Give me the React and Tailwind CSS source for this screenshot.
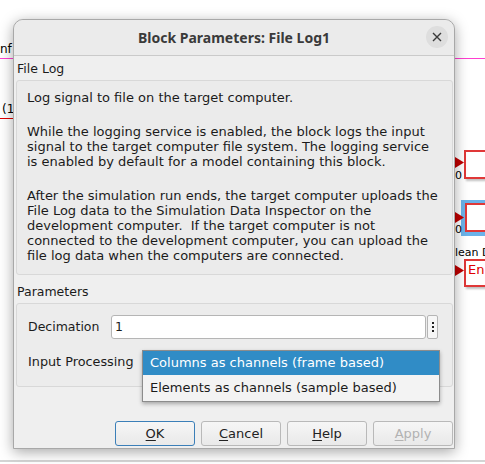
import React from "react";

const Arrow = ({ top }) => (
  <svg className="absolute" style={{ left: 455, top }} width="9" height="11" viewBox="0 0 9 11">
    <polygon points="0,0 9,5.5 0,11" fill="#c00000" />
  </svg>
);

const Btn = ({ u, rest, primary, disabled }) => (
  <button
    className={
      "w-[80px] h-[25px] rounded-[3px] border text-[13px] bg-gradient-to-b from-[#f6f6f6] to-[#e9e9e9] " +
      (primary ? "border-[#3b7fb8] " : "border-[#b9b9b9] ") +
      (disabled ? "text-[#b2b2b2]" : "text-[#222]")
    }
  >
    <span className="underline underline-offset-2">{u}</span>
    {rest}
  </button>
);

export default function App() {
  return (
    <div className="relative w-[485px] h-[464px] bg-white overflow-hidden font-['DejaVu_Sans',sans-serif] text-[#1b1b1b]">
      {/* diagram canvas behind the dialog */}
      <div className="absolute left-0 right-0 top-[58px] h-px bg-[#ff3fd0]" />
      <div className="absolute left-0 top-[40px] text-[12px] text-black">nf</div>
      <div className="absolute left-[2px] top-[100px] text-[12px] text-black">(1</div>
      <div className="absolute left-0 w-[14px] top-[118px] h-px bg-[#e00000]" />

      <div className="absolute left-[464px] top-[150px] w-[40px] h-[29px] border-2 border-[#e03838] bg-white shadow-[2px_2px_2px_rgba(0,0,0,0.25)]" />
      <Arrow top={157} />
      <div className="absolute left-[455px] top-[168px] text-[11px] text-black">0</div>

      <div className="absolute left-[461px] top-[200px] w-[40px] h-[36px] bg-[#6bb3ea]" />
      <div className="absolute left-[465px] top-[203px] w-[40px] h-[29px] border-2 border-[#e03838] bg-white" />
      <Arrow top={212} />
      <div className="absolute left-[455px] top-[222px] text-[11px] text-black">0</div>

      <div className="absolute left-[455px] top-[246px] text-[11px] leading-[13px] text-black whitespace-nowrap">lean D</div>
      <div className="absolute left-[464px] top-[259px] w-[40px] h-[28px] border-2 border-[#e03838] bg-white shadow-[2px_2px_2px_rgba(0,0,0,0.25)] pl-[2px] text-[13px] leading-[18px] text-[#e00000]">En</div>
      <Arrow top={265} />

      <div className="absolute left-0 right-0 top-[460px] h-[2px] bg-[#d4d4d4]" />

      {/* dialog window */}
      <div className="relative ml-[13px] mt-[19px] w-[442px] h-[430px] flex flex-col rounded-t-[10px] border border-[#a8a8a8] bg-[#efefef] shadow-[0_3px_14px_rgba(0,0,0,0.35)]">
        <div className="relative h-[36px] shrink-0 flex items-center justify-center rounded-t-[10px] bg-[#ebebeb] border-b border-[#cacaca]">
          <span className="font-['Noto_Sans',sans-serif] font-bold text-[14px] text-[#3a3a3a]">Block Parameters: File Log1</span>
          <div className="absolute right-[6px] top-[6px] w-[22px] h-[22px] rounded-full bg-[#dedede] flex items-center justify-center">
            <svg width="10" height="10" viewBox="0 0 10 10">
              <path d="M1 1 L9 9 M9 1 L1 9" stroke="#3a3a3a" strokeWidth="1.4" />
            </svg>
          </div>
        </div>

        <div className="flex flex-col pl-[2px] pr-[1px] text-[12.5px]">
          <div className="mt-[4px] leading-[17px] pl-[1px]">File Log</div>
          <div className="mt-[3px] h-[195px] rounded-[3px] border border-[#d8d8d8] bg-[#ebebeb] pl-[10px] pt-[9px] leading-[15px] text-[13px]">
            <p>Log signal to file on the target computer.</p>
            <p className="mt-[19px]">
              While the logging service is enabled, the block logs the input<br />
              signal to the target computer file system. The logging service<br />
              is enabled by default for a model containing this block.
            </p>
            <p className="mt-[19px]">
              After the simulation run ends, the target computer uploads the<br />
              File Log data to the Simulation Data Inspector on the<br />
              development computer.&nbsp; If the target computer is not<br />
              connected to the development computer, you can upload the<br />
              file log data when the computers are connected.
            </p>
          </div>

          <div className="mt-[8px] leading-[17px] pl-[1px]">Parameters</div>
          <div className="relative mt-[3px] h-[84px] rounded-[3px] border border-[#d8d8d8] bg-[#ececec] pl-[11px] pr-[14px] pt-[11px]">
            <div className="flex items-center h-[24px]">
              <span className="w-[83px]">Decimation</span>
              <div className="flex-1 h-[24px] rounded-[3px] border border-[#b5b5b5] bg-white pl-[3px] leading-[22px]">1</div>
              <div className="ml-[1px] w-[11px] h-[24px] rounded-[2px] border border-[#b5b5b5] bg-[#f6f6f6] flex flex-col items-center justify-center gap-[2px]">
                <span className="w-[2px] h-[2px] bg-[#222]" />
                <span className="w-[2px] h-[2px] bg-[#222]" />
                <span className="w-[2px] h-[2px] bg-[#222]" />
              </div>
            </div>
            <div className="flex items-center h-[24px] mt-[11px]">
              <span className="text-[12.8px]">Input Processing</span>
            </div>

            {/* open combo popup */}
            <div className="absolute left-[125px] top-[46px] w-[298px] h-[52px] border border-[#8c8c8c] bg-[#f3f3f3] shadow-[0_2px_4px_rgba(0,0,0,0.3)] flex flex-col text-[13px]">
              <div className="h-[24px] bg-[#308cc6] text-white pl-[7px] leading-[24px]">Columns as channels (frame based)</div>
              <div className="h-[25px] pl-[7px] leading-[25px]">Elements as channels (sample based)</div>
            </div>
          </div>
        </div>

        <div className="mt-auto mb-[2px] flex justify-end gap-[6px] pr-[1px]">
          <Btn u="O" rest="K" primary />
          <Btn u="C" rest="ancel" />
          <Btn u="H" rest="elp" />
          <Btn u="A" rest="pply" disabled />
        </div>
      </div>
    </div>
  );
}
